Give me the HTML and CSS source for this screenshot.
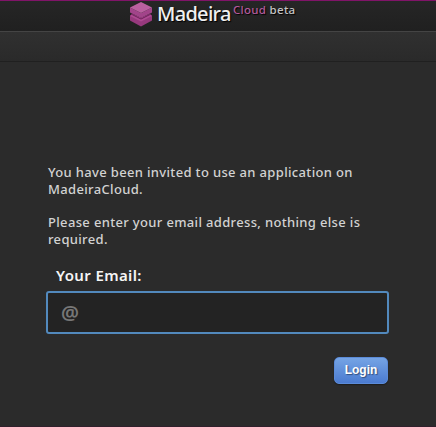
FILE: index.html
```html
<!DOCTYPE html>
<html lang="en">
<head>
<meta charset="utf-8">
<title>Madeira Cloud</title>
<link rel="stylesheet" href="styles.css">
</head>
<body>
<header class="header">
  <svg class="logo" viewBox="0 0 22 25" width="22" height="25" aria-hidden="true">
    <path fill="#97397d" d="M0 14l2-2 9 4 9-4 2 2v4.500l-11 6-11-6z"/>
    <path fill="#ae4a92" d="M0 14l2-2 9 4 9-4 2 2-11 5.500z"/>
    <path fill="#6d2059" d="M1 11.500l10 5 10-5v1l-10 5-10-5z"/>
    <path fill="#a2448a" d="M0 5.500l11 5.500 11-5.500v5l-11 5.500-11-5.500z"/>
    <path fill="#b9609f" d="M0 5.500l11-5.500 11 5.500-11 5.500z"/>
  </svg>
  <h1 class="brand">Madeira</h1>
  <span class="sub"><span class="cloud">Cloud</span> beta</span>
</header>
<nav class="subbar"></nav>
<main class="content">
  <p class="intro">You have been invited to use an application on<br>MadeiraCloud.</p>
  <p class="intro second">Please enter your email address, nothing else is<br>required.</p>
  <form class="form">
    <label class="label" for="email">Your Email:</label>
    <input class="email" id="email" type="text" placeholder="@">
    <button class="login" type="button">Login</button>
  </form>
</main>
</body>
</html>
```

FILE: styles.css
```css
* { box-sizing: border-box; }
body {
  margin: 0;
  height: 427px;
  overflow: hidden;
  background: #2b2b2b;
  border-bottom: 1px solid #30202c;
  font-family: "Noto Sans", sans-serif;
  color: #d2d2d2;
}
.header {
  display: flex;
  height: 31px;
  padding-left: 130px;
  border-top: 1px solid #801468;
  background: linear-gradient(#262626, #202020);
  text-shadow: 1px 1px 1px #000;
}
.logo { margin-top: 1px; }
.brand {
  margin: 0 0 0 5px;
  width: 73px;
  font-size: 20px;
  line-height: 26px;
  font-weight: 500;
  letter-spacing: -0.7px;
  color: #f0f0f0;
}
.sub {
  margin-left: 3px;
  font-size: 11.5px;
  line-height: 18px;
  font-weight: 500;
  letter-spacing: 0.3px;
  color: #c4c4c4;
}
.cloud { color: #b45a9c; }
.subbar {
  height: 31px;
  border-top: 1px solid #444;
  border-bottom: 1px solid #202020;
  background: linear-gradient(#303030, #2a2a2a);
}
.content { padding: 102px 47px 0 48px; }
.intro {
  margin: 0;
  font-size: 13px;
  line-height: 17px;
  font-weight: 500;
  letter-spacing: 0.34px;
  white-space: nowrap;
}
.second { margin-top: 16px; }
.form { display: flex; flex-direction: column; }
.label {
  margin: 17px 0 0 8px;
  font-size: 15px;
  line-height: 20px;
  font-weight: 600;
  letter-spacing: 0.38px;
  color: #f5f5f5;
}
.email {
  width: 343px;
  height: 43px;
  margin: 6px 0 0 -2px;
  padding: 0 13px;
  border: 2px solid #5289bd;
  border-radius: 3px;
  background: #232323;
  font: 600 20px "Noto Sans", sans-serif;
  color: #ddd;
}
.email::placeholder { color: #777; }
.login {
  align-self: flex-end;
  width: 54px;
  height: 27px;
  margin: 23px 1px 0 0;
  padding: 0;
  border: 1px solid #5b8bd8;
  border-radius: 5px;
  background: linear-gradient(#75a4e5, #4b7bd0);
  box-shadow: 0 1px 1px #1d1d1d;
  font: bold 12px/23px "Liberation Sans", sans-serif;
  color: #fff;
  text-shadow: 1px 1px 1px #344f7d;
}
```
